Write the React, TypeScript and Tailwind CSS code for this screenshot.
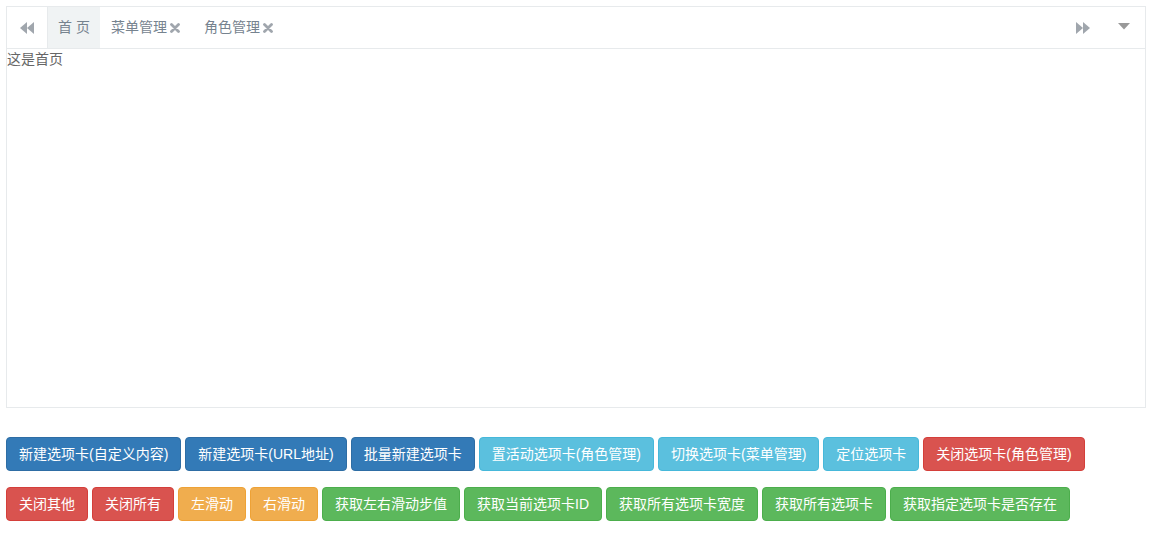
import React from "react"

type Variant = "primary" | "info" | "danger" | "warning" | "success"

const variants: Record<Variant, string> = {
  primary: "bg-[#337ab7] border-[#2e6da4]",
  info: "bg-[#5bc0de] border-[#46b8da]",
  danger: "bg-[#d9534f] border-[#d43f3a]",
  warning: "bg-[#f0ad4e] border-[#eea236]",
  success: "bg-[#5cb85c] border-[#4cae4c]",
}

function Btn({ v, children }: { v: Variant; children: React.ReactNode }) {
  return (
    <button
      className={`${variants[v]} border rounded-[4px] px-3 py-[6px] text-[14px] leading-[20px] text-white whitespace-nowrap`}
    >
      {children}
    </button>
  )
}

function Backward() {
  return (
    <svg width="14" height="12" viewBox="0 0 14 12" fill="#a0a6ad">
      <path d="M7 0 L0 6 L7 12 Z" />
      <path d="M14 0 L7 6 L14 12 Z" />
    </svg>
  )
}

function Forward() {
  return (
    <svg width="14" height="12" viewBox="0 0 14 12" fill="#a0a6ad">
      <path d="M0 0 L7 6 L0 12 Z" />
      <path d="M7 0 L14 6 L7 12 Z" />
    </svg>
  )
}

function Caret() {
  return (
    <svg width="12" height="7" viewBox="0 0 12 7" fill="#999">
      <path d="M0 0 L12 0 L6 6.5 Z" />
    </svg>
  )
}

function Close() {
  return (
    <svg width="10" height="10" viewBox="0 0 10 10" className="ml-[3px]">
      <path d="M1.5 1.5 L8.5 8.5 M8.5 1.5 L1.5 8.5" stroke="#a0a6ad" strokeWidth="2.8" strokeLinecap="round" />
    </svg>
  )
}

export default function App() {
  return (
    <div
      className="p-[6px] bg-white text-[14px] text-[#676a6c]"
      style={{ fontFamily: '"Liberation Sans", "Noto Sans CJK SC", sans-serif' }}
    >
      <div className="w-[1140px] border border-[#e7eaec] h-[402px] flex flex-col">
        <div className="h-[42px] border-b border-[#e7eaec] flex items-stretch">
          <div className="w-[41px] border-r border-[#e7eaec] flex items-center justify-center">
            <Backward />
          </div>
          <div className="flex items-center px-[10px] bg-[#f0f3f4] text-[#76838f]">
            首&nbsp;页
          </div>
          <div className="flex items-center pl-[11px] pr-[12px] text-[#76838f]">
            菜单管理
            <Close />
          </div>
          <div className="flex items-center px-[12px] text-[#76838f]">
            角色管理
            <Close />
          </div>
          <div className="flex-1" />
          <div className="w-[40px] flex items-center justify-center">
            <Forward />
          </div>
          <div className="w-[42px] flex items-center justify-center pb-[3px]">
            <Caret />
          </div>
        </div>
        <div className="flex-1 text-[#666] leading-[20px]">这是首页</div>
      </div>

      <div className="mt-[29px] flex gap-1">
        <Btn v="primary">新建选项卡(自定义内容)</Btn>
        <Btn v="primary">新建选项卡(URL地址)</Btn>
        <Btn v="primary">批量新建选项卡</Btn>
        <Btn v="info">置活动选项卡(角色管理)</Btn>
        <Btn v="info">切换选项卡(菜单管理)</Btn>
        <Btn v="info">定位选项卡</Btn>
        <Btn v="danger">关闭选项卡(角色管理)</Btn>
      </div>

      <div className="mt-[16px] flex gap-1">
        <Btn v="danger">关闭其他</Btn>
        <Btn v="danger">关闭所有</Btn>
        <Btn v="warning">左滑动</Btn>
        <Btn v="warning">右滑动</Btn>
        <Btn v="success">获取左右滑动步值</Btn>
        <Btn v="success">获取当前选项卡ID</Btn>
        <Btn v="success">获取所有选项卡宽度</Btn>
        <Btn v="success">获取所有选项卡</Btn>
        <Btn v="success">获取指定选项卡是否存在</Btn>
      </div>
    </div>
  )
}
